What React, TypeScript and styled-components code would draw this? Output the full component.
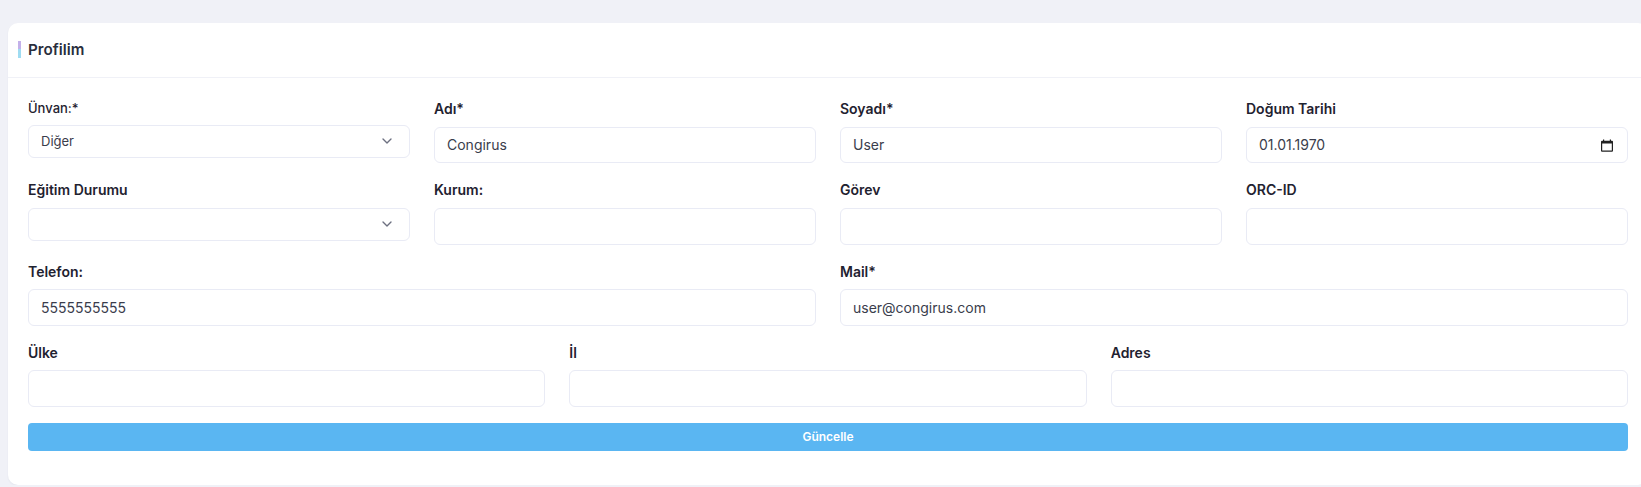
import styled, { createGlobalStyle } from "styled-components";
import { ChevronDown } from "lucide-react";

const GlobalStyle = createGlobalStyle`
  html, body {
    margin: 0;
    padding: 0;
    background: #f0f1f7;
    overflow: hidden;
  }
  body {
    font-family: Inter, "Noto Sans", sans-serif;
  }
`;

function CalendarIcon() {
  return (
    <CalendarSvg viewBox="0 0 12 13" width="12" height="13">
      <path d="M2 0.5h1.2v1.3h5.6V0.5H10v1.3h1a1 1 0 0 1 1 1v9a1 1 0 0 1-1 1H1a1 1 0 0 1-1-1v-9a1 1 0 0 1 1-1h1zM1.2 4.6v7h9.6v-7z" fill="#222" />
    </CalendarSvg>
  );
}

function App() {
  return (
    <Page>
      <GlobalStyle />
      <Card>
        <CardHeader>
          <Title>Profilim</Title>
        </CardHeader>
        <CardBody>
          <Row $columns={4}>
            <Field>
              <SelectLabel>Ünvan:*</SelectLabel>
              <SelectWrap>
                <Select defaultValue="diger">
                  <option value="diger">Diğer</option>
                </Select>
                <SelectChevron size={16} strokeWidth={2} />
              </SelectWrap>
            </Field>
            <Field>
              <Label>Adı*</Label>
              <Input defaultValue="Congirus" />
            </Field>
            <Field>
              <Label>Soyadı*</Label>
              <Input defaultValue="User" />
            </Field>
            <Field>
              <Label>Doğum Tarihi</Label>
              <DateWrap>
                <Input defaultValue="01.01.1970" />
                <CalendarIcon />
              </DateWrap>
            </Field>
          </Row>
          <Row $columns={4}>
            <Field>
              <Label>Eğitim Durumu</Label>
              <SelectWrap>
                <Select defaultValue="">
                  <option value=""></option>
                </Select>
                <SelectChevron size={16} strokeWidth={2} />
              </SelectWrap>
            </Field>
            <Field>
              <Label>Kurum:</Label>
              <Input />
            </Field>
            <Field>
              <Label>Görev</Label>
              <Input />
            </Field>
            <Field>
              <Label>ORC-ID</Label>
              <Input />
            </Field>
          </Row>
          <Row $columns={2}>
            <Field>
              <Label>Telefon:</Label>
              <Input defaultValue="5555555555" />
            </Field>
            <Field>
              <Label>Mail*</Label>
              <Input defaultValue="user@congirus.com" />
            </Field>
          </Row>
          <LastRow $columns={3}>
            <Field>
              <Label>Ülke</Label>
              <Input />
            </Field>
            <Field>
              <Label>İl</Label>
              <Input />
            </Field>
            <Field>
              <Label>Adres</Label>
              <Input />
            </Field>
          </LastRow>
          <SubmitButton type="button">Güncelle</SubmitButton>
        </CardBody>
      </Card>
    </Page>
  );
}

export default App;

const Page = styled.div`
  width: 1656px;
  padding: 23px 0 0 8px;
  box-sizing: border-box;
`;

const Card = styled.div`
  width: 1640px;
  height: 461.5px;
  box-sizing: border-box;
  background: #fff;
  border-radius: 10px;
  box-shadow: 0 1px 2px rgba(40, 44, 80, 0.06);
`;

const CardHeader = styled.div`
  height: 54px;
  display: flex;
  align-items: center;
  padding: 0 20px 0 10px;
  border-bottom: 1px solid #f0f1f7;
`;

const Title = styled.h4`
  margin: 0 0 2px;
  padding-left: 7px;
  font-size: 15.2px;
  line-height: 17px;
  font-weight: 600;
  color: #2a2e3d;
  border-left: 3px solid;
  border-image: linear-gradient(to bottom, #c3b1ea 50%, #9fdcf2 50%) 1;
`;

const CardBody = styled.div`
  padding: 21px 20px 0;
`;

const Row = styled.div<{ $columns: number }>`
  display: grid;
  grid-template-columns: repeat(${(p) => p.$columns}, minmax(0, 1fr));
  column-gap: 24px;
  margin-bottom: 17px;
`;

const LastRow = styled(Row)`
  margin-bottom: 15.5px;
`;

const Field = styled.div`
  display: flex;
  flex-direction: column;
  min-width: 0;
`;

const Label = styled.label`
  font-size: 14px;
  line-height: 19.5px;
  font-weight: 600;
  color: #1f2230;
  margin-bottom: 8px;
`;

const SelectLabel = styled(Label)`
  font-size: 13px;
  font-weight: 500;
  line-height: 18.5px;
  margin-bottom: 7px;
`;

const Input = styled.input`
  width: 100%;
  height: 36.8px;
  box-sizing: border-box;
  padding: 0 12px;
  font-family: inherit;
  font-size: 14px;
  color: #3a3d4c;
  background: #fff;
  border: 1px solid #e9ebf5;
  border-radius: 6px;
  outline: none;
`;

const SelectWrap = styled.div`
  position: relative;
`;

const Select = styled.select`
  width: 100%;
  height: 33.5px;
  box-sizing: border-box;
  padding: 0 12px;
  font-family: inherit;
  font-size: 13px;
  color: #3a3d4c;
  background: #fff;
  border: 1px solid #e9ebf5;
  border-radius: 6px;
  outline: none;
  appearance: none;
`;

const SelectChevron = styled(ChevronDown)`
  position: absolute;
  right: 15px;
  top: 8px;
  color: #6c7080;
  pointer-events: none;
`;

const DateWrap = styled.div`
  position: relative;
`;

const CalendarSvg = styled.svg`
  position: absolute;
  right: 15.5px;
  top: 12px;
`;

const SubmitButton = styled.button`
  display: block;
  width: 100%;
  height: 28px;
  padding: 0;
  font-family: inherit;
  font-size: 12px;
  font-weight: 600;
  color: #fff;
  background: #5ab6f2;
  border: none;
  border-radius: 4px;
`;
